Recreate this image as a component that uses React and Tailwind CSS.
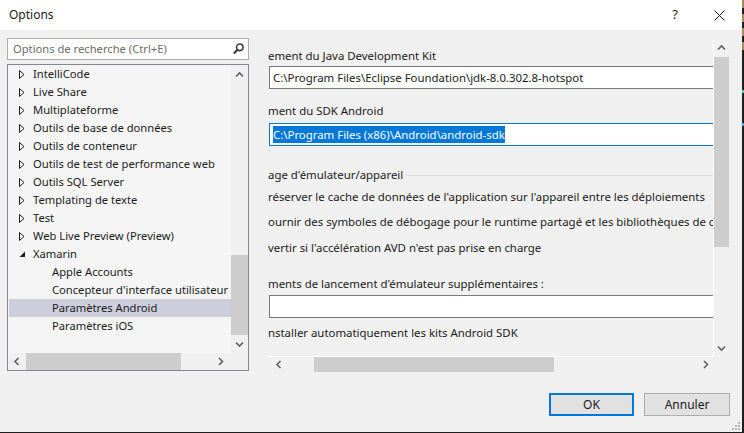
import React from 'react';

const items = [
  { label: 'IntelliCode' },
  { label: 'Live Share' },
  { label: 'Multiplateforme' },
  { label: 'Outils de base de données' },
  { label: 'Outils de conteneur' },
  { label: 'Outils de test de performance web' },
  { label: 'Outils SQL Server' },
  { label: 'Templating de texte' },
  { label: 'Test' },
  { label: 'Web Live Preview (Preview)' },
  { label: 'Xamarin', open: true },
  { label: 'Apple Accounts', child: true },
  { label: "Concepteur d'interface utilisateur", child: true },
  { label: 'Paramètres Android', child: true, selected: true },
  { label: 'Paramètres iOS', child: true },
];

const Chevron = ({ dir }) => {
  const d = {
    up: 'M1 5.5 L4.5 2 L8 5.5',
    down: 'M1 2.5 L4.5 6 L8 2.5',
    left: 'M5.5 1 L2 4.5 L5.5 8',
    right: 'M3 1 L6.5 4.5 L3 8',
  }[dir];
  return (
    <svg width="9" height="9" viewBox="0 0 9 9">
      <path d={d} fill="none" stroke="#606060" strokeWidth="1.6" />
    </svg>
  );
};

const TreeRow = ({ item }) => (
  <div
    className={`h-[18px] flex items-center whitespace-nowrap ${item.selected ? 'bg-[#cccedb] ml-[1px]' : ''}`}
  >
    {item.child ? (
      <span className={item.selected ? 'pl-[43px]' : 'pl-[44px]'}>{item.label}</span>
    ) : (
      <>
        <span className="pl-[11px] flex items-center w-[25px]">
          {item.open ? (
            <svg width="7" height="7" viewBox="0 0 7 7">
              <polygon points="6,0.5 6,6 0.5,6" fill="#1e1e1e" />
            </svg>
          ) : (
            <svg width="6" height="9" viewBox="0 0 6 9">
              <polygon points="0.5,0.5 5,4.5 0.5,8.5" fill="none" stroke="#1e1e1e" strokeWidth="1" />
            </svg>
          )}
        </span>
        <span>{item.label}</span>
      </>
    )}
  </div>
);

const Field = ({ children, focused }) => (
  <div
    className={`ml-[1px] h-[23px] bg-white border-y border-l flex items-center pl-[3px] whitespace-nowrap ${
      focused ? 'border-[#0078d7]' : 'border-[#7a7a7a]'
    }`}
  >
    {children}
  </div>
);

const Line = ({ mt, children }) => (
  <div className={`${mt} h-[16px] leading-[16px] whitespace-nowrap`}>{children}</div>
);

export default function App() {
  return (
    <div className="w-[744px] h-[433px] bg-[#1e1e1e] flex font-['Noto_Sans',sans-serif] text-[11.2px] text-[#1b1b1b] overflow-hidden">
      <div className="w-[742px] h-[432px] flex flex-col shrink-0">
        <div className="h-[30px] bg-white flex items-center pl-[9px] pr-[17px] text-[12px]">
          <span>Options</span>
          <span className="ml-auto text-[13px] mr-[36px]">?</span>
          <svg width="11" height="11" viewBox="0 0 11 11">
            <path d="M0.5 0.5 L10.5 10.5 M10.5 0.5 L0.5 10.5" stroke="#1b1b1b" strokeWidth="1" />
          </svg>
        </div>
        <div className="flex-1 bg-[#f0f0f0] flex flex-col">
          <div className="flex h-[342px]">
            <div className="pl-[7px] pt-[8px] w-[249px] flex flex-col gap-[4px]">
              <div className="h-[22px] bg-white border border-[#abadb3] flex items-center pl-[5px] pr-[4px]">
                <span className="text-[#6d6d6d]">Options de recherche (Ctrl+E)</span>
                <svg className="ml-auto" width="11" height="12" viewBox="0 0 11 12">
                  <circle cx="6.8" cy="4.3" r="3.3" fill="none" stroke="#3c3c3c" strokeWidth="1.6" />
                  <path d="M4.5 6.8 L1 10.5" stroke="#3c3c3c" strokeWidth="2.2" />
                </svg>
              </div>
              <div className="h-[307px] border border-[#828790] grid grid-cols-[223px_17px] grid-rows-[288px_17px]">
                <div className="bg-[#f5f5f5] overflow-hidden">
                  {items.map((it) => (
                    <TreeRow key={it.label} item={it} />
                  ))}
                </div>
                <div className="bg-[#f0f0f0] flex flex-col items-center">
                  <div className="h-[20px] flex items-center justify-center"><Chevron dir="up" /></div>
                  <div className="flex-1" />
                  <div className="w-[17px] h-[80px] bg-[#cdcdcd]" />
                  <div className="h-[18px] flex items-center justify-center"><Chevron dir="down" /></div>
                </div>
                <div className="bg-[#f0f0f0] flex items-center">
                  <div className="w-[18px] flex justify-center"><Chevron dir="left" /></div>
                  <div className="w-[155px] h-[17px] bg-[#cdcdcd]" />
                  <div className="flex-1 flex justify-end pr-[6px]"><Chevron dir="right" /></div>
                </div>
                <div className="bg-[#f0f0f0]" />
              </div>
            </div>
            <div className="ml-[19px] mt-[10px] grid grid-cols-[446px_15px] grid-rows-[317px_15px]">
              <div className="overflow-hidden border-r border-b border-white text-[11.4px]">
                <Line mt="mt-[8px]">ement du Java Development Kit</Line>
                <div className="mt-[2px]">
                  <Field>C:\Program Files\Eclipse Foundation\jdk-8.0.302.8-hotspot</Field>
                </div>
                <Line mt="mt-[14px]">ment du SDK Android</Line>
                <div className="mt-[4px]">
                  <Field focused>
                    <span className="bg-[#0078d7] text-white">C:\Program Files (x86)\Android\android-sdk</span>
                  </Field>
                </div>
                <div className="mt-[21px] h-[16px] flex items-center gap-[3px] whitespace-nowrap">
                  <span>age d'émulateur/appareil</span>
                  <div className="flex-1 h-px bg-[#dcdcdc]" />
                </div>
                <Line mt="mt-[6px]">réserver le cache de données de l'application sur l'appareil entre les déploiements</Line>
                <Line mt="mt-[9px]">ournir des symboles de débogage pour le runtime partagé et les bibliothèques de classes</Line>
                <Line mt="mt-[10px]">vertir si l'accélération AVD n'est pas prise en charge</Line>
                <Line mt="mt-[20px]">ments de lancement d'émulateur supplémentaires :</Line>
                <div className="mt-[3px]">
                  <Field />
                </div>
                <Line mt="mt-[7px]">nstaller automatiquement les kits Android SDK</Line>
                <Line mt="mt-[12px]">ation AndroidX Migrator (expérimental)</Line>
              </div>
              <div className="bg-[#f0f0f0] flex flex-col items-center">
                <div className="h-[17px] flex items-center justify-center"><Chevron dir="up" /></div>
                <div className="w-[15px] h-[190px] bg-[#cdcdcd]" />
                <div className="flex-1" />
                <div className="h-[18px] flex items-center justify-center"><Chevron dir="down" /></div>
              </div>
              <div className="bg-[#f0f0f0] flex items-center">
                <div className="w-[18px] pl-[5px] flex justify-center"><Chevron dir="left" /></div>
                <div className="ml-[28px] w-[240px] h-[15px] bg-[#cdcdcd]" />
                <div className="flex-1 flex justify-end pr-[4px]"><Chevron dir="right" /></div>
              </div>
              <div className="bg-[#f0f0f0]" />
            </div>
          </div>
          <div className="mt-[21px] flex justify-end gap-[10px] pr-[12px] text-[12px]">
            <button className="w-[85px] h-[23px] bg-[#e1e1e1] border-2 border-[#0078d7] flex items-center justify-center">
              OK
            </button>
            <button className="w-[86px] h-[23px] bg-[#e1e1e1] border border-[#adadad] flex items-center justify-center">
              Annuler
            </button>
          </div>
          <div className="flex-1 flex items-end justify-end pr-[2px] pb-[2px]">
            <svg width="8" height="8" viewBox="0 0 8 8">
              <g fill="#b8b8b8">
                <rect x="6" y="0" width="2" height="2" />
                <rect x="3" y="3" width="2" height="2" />
                <rect x="6" y="3" width="2" height="2" />
                <rect x="0" y="6" width="2" height="2" />
                <rect x="3" y="6" width="2" height="2" />
                <rect x="6" y="6" width="2" height="2" />
              </g>
            </svg>
          </div>
        </div>
      </div>
      <div className="w-[2px] flex flex-col">
        <div className="h-[8px] bg-[#a68a5b]" />
        <div className="h-[6px]" />
        <div className="h-[8px] bg-[#a68a5b]" />
        <div className="h-[6px]" />
        <div className="h-[8px] bg-[#a68a5b]" />
        <div className="h-[6px]" />
        <div className="h-[8px] bg-[#a68a5b]" />
        <div className="h-[40px]" />
        <div className="h-[3px] bg-[#4ec9b0]" />
        <div className="h-[30px]" />
        <div className="h-[3px] bg-[#569cd6]" />
      </div>
    </div>
  );
}
